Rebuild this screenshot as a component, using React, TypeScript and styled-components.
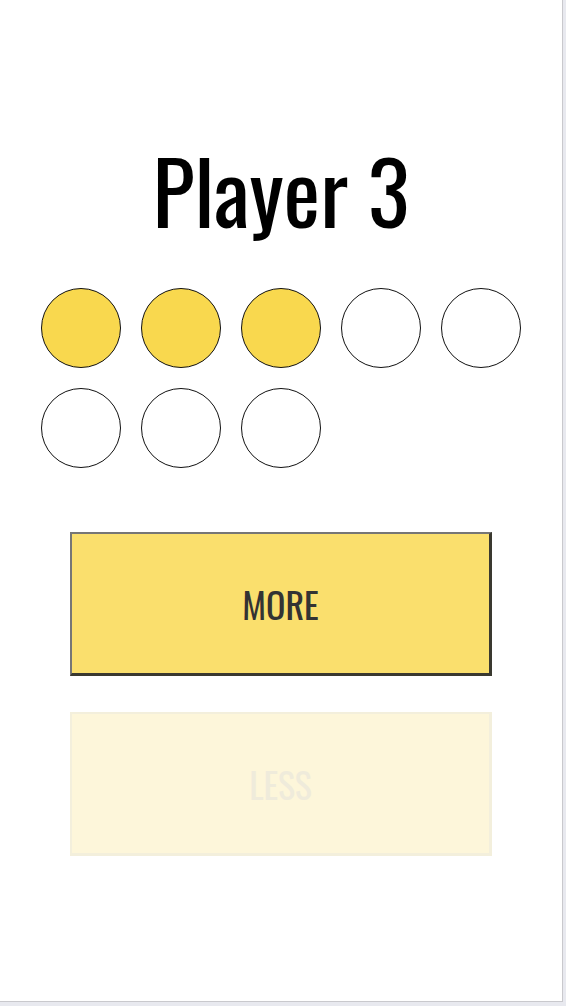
import React from "react";
import styled, { createGlobalStyle } from "styled-components";

const Global = createGlobalStyle`
  html, body { margin: 0; padding: 0; background: #e8e9ef; }
  body { font-family: "Oswald", "Roboto Condensed", sans-serif; }
`;

const Frame = styled.div`
  width: 563px;
  height: 1002px;
  background: #fff;
  border-right: 1px solid #c9c9cd;
  border-bottom: 1px solid #c9c9cd;
  display: flex;
  flex-direction: column;
  align-items: center;
  padding-top: 145px;
  box-sizing: border-box;
`;

const Title = styled.h1`
  margin: 0;
  font-family: "Oswald", sans-serif;
  font-weight: 400;
  font-size: 87px;
  line-height: 1;
  color: #000;
`;

const Dots = styled.div`
  width: 480px;
  margin-top: 56px;
  display: flex;
  flex-wrap: wrap;
  gap: 20px;
`;

const Dot = styled.div<{ $on: boolean }>`
  width: 80px;
  height: 80px;
  box-sizing: border-box;
  border-radius: 50%;
  border: 1.5px solid #111;
  background: ${(p) => (p.$on ? "#f9d84e" : "#fff")};
`;

const Buttons = styled.div`
  margin-top: 64px;
  display: flex;
  flex-direction: column;
  gap: 36px;
`;

const Button = styled.button<{ $disabled?: boolean }>`
  width: 422px;
  height: 144px;
  box-sizing: border-box;
  border-style: solid;
  border-width: 2px 3px 3px 2px;
  border-color: ${(p) =>
    p.$disabled ? "#f3efdc" : "#767676 #3a3930 #3a3930 #767676"};
  background: ${(p) => (p.$disabled ? "#fdf6da" : "#fadf6d")};
  color: ${(p) => (p.$disabled ? "#efebdb" : "#333")};
  font-family: "Oswald", sans-serif;
  font-size: 36px;
  font-weight: 400;
  padding: 0;
  cursor: ${(p) => (p.$disabled ? "default" : "pointer")};
`;

export default function App() {
  const filled = 3;
  const total = 8;
  return (
    <>
      <Global />
      <Frame>
        <Title>Player 3</Title>
        <Dots>
          {Array.from({ length: total }, (_, i) => (
            <Dot key={i} $on={i < filled} />
          ))}
        </Dots>
        <Buttons>
          <Button>MORE</Button>
          <Button $disabled disabled>
            LESS
          </Button>
        </Buttons>
      </Frame>
    </>
  );
}
